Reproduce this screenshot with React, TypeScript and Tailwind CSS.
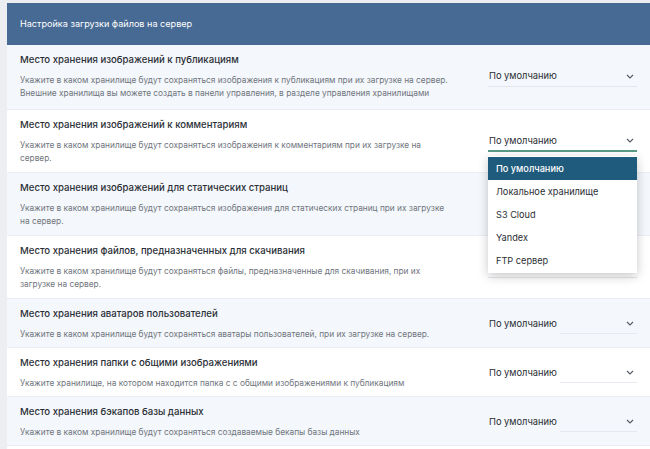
import { useState } from 'react';

type Setting = {
  title: string;
  desc: string;
  partialLine?: boolean;
};

const settings: Setting[] = [
  {
    title: 'Место хранения изображений к публикациям',
    desc: 'Укажите в каком хранилище будут сохраняться изображения к публикациям при их загрузке на сервер. Внешние хранилища вы можете создать в панели управления, в разделе управления хранилищами',
  },
  {
    title: 'Место хранения изображений к комментариям',
    desc: 'Укажите в каком хранилище будут сохраняться изображения к комментариям при их загрузке на сервер.',
  },
  {
    title: 'Место хранения изображений для статических страниц',
    desc: 'Укажите в каком хранилище будут сохраняться изображения для статических страниц при их загрузке на сервер.',
  },
  {
    title: 'Место хранения файлов, предназначенных для скачивания',
    desc: 'Укажите в каком хранилище будут сохраняться файлы, предназначенные для скачивания, при их загрузке на сервер.',
  },
  {
    title: 'Место хранения аватаров пользователей',
    desc: 'Укажите в каком хранилище будут сохраняться аватары пользователей, при их загрузке на сервер.',
    partialLine: true,
  },
  {
    title: 'Место хранения папки с общими изображениями',
    desc: 'Укажите хранилище, на котором находится папка с с общими изображениями к публикациям',
    partialLine: true,
  },
  {
    title: 'Место хранения бэкапов базы данных',
    desc: 'Укажите в каком хранилище будут сохраняться создаваемые бекапы базы данных',
    partialLine: true,
  },
];

const options = ['По умолчанию', 'Локальное хранилище', 'S3 Cloud', 'Yandex', 'FTP сервер'];

function Chevron() {
  return (
    <svg width="8" height="5" viewBox="0 0 8 5" className="shrink-0">
      <polyline points="1,1 4,4 7,1" fill="none" stroke="#555b63" strokeWidth="1.1" />
    </svg>
  );
}

function StorageSelect({ open, partialLine }: { open?: boolean; partialLine?: boolean }) {
  const [value] = useState(options[0]);

  return (
    <div className="relative w-[149px] shrink-0">
      <div className="flex h-[19px] items-center justify-between pl-px pr-[3px] text-[9.3px] text-[#2a2e34]">
        <span>{value}</span>
        <Chevron />
      </div>
      {open ? (
        <div className="h-[2px] w-full bg-[#5a9c89]" />
      ) : partialLine ? (
        <div className="ml-[72px] h-px bg-[#e6eaf0]" />
      ) : (
        <div className="h-px w-full bg-[#e3e7ed]" />
      )}
      {open && (
        <ul className="absolute left-0 top-[25px] z-10 w-[149px] bg-white py-px shadow-[0_3px_10px_rgba(0,0,0,0.22)]">
          {options.map((opt, i) => (
            <li
              key={opt}
              className={`flex h-[23px] items-center px-[8px] text-[9.2px] ${i === 0 ? 'bg-[#1f5b7d] font-medium text-white' : 'text-[#2a2e34]'}`}
            >
              {opt}
            </li>
          ))}
        </ul>
      )}
    </div>
  );
}

export default function App() {
  return (
    <div
      className="h-[449px] w-[650px] overflow-hidden bg-[#eceef1] pl-[7px] pt-[3px]"
      style={{ fontFamily: 'Inter, "Noto Sans", sans-serif' }}
    >
      <section className="bg-white">
        <header className="flex h-[42px] items-center bg-[#476a94] px-[13px] text-[9.1px] text-white">
          Настройка загрузки файлов на сервер
        </header>
        {settings.map((s, i) => (
          <div
            key={s.title}
            className={`flex items-center border-b border-[#eaeef3] pl-[13px] pr-[13px] pt-[8px] ${i === 0 ? 'pb-[9px]' : s.partialLine ? 'pb-[6px]' : 'pb-[7px]'} ${i % 2 === 0 ? 'bg-[#f4f7fb]' : 'bg-white'}`}
          >
            <div className="w-[431px]">
              <h4 className="text-[9.6px] font-medium leading-[14px] text-[#2b2f36]">{s.title}</h4>
              <p className="mt-[7px] text-[8.3px] leading-[13px] text-[#6f757d]">{s.desc}</p>
            </div>
            <div className="ml-auto">
              <StorageSelect open={i === 1} partialLine={s.partialLine} />
            </div>
          </div>
        ))}
        <div className="h-[20px] bg-white" />
      </section>
    </div>
  );
}
